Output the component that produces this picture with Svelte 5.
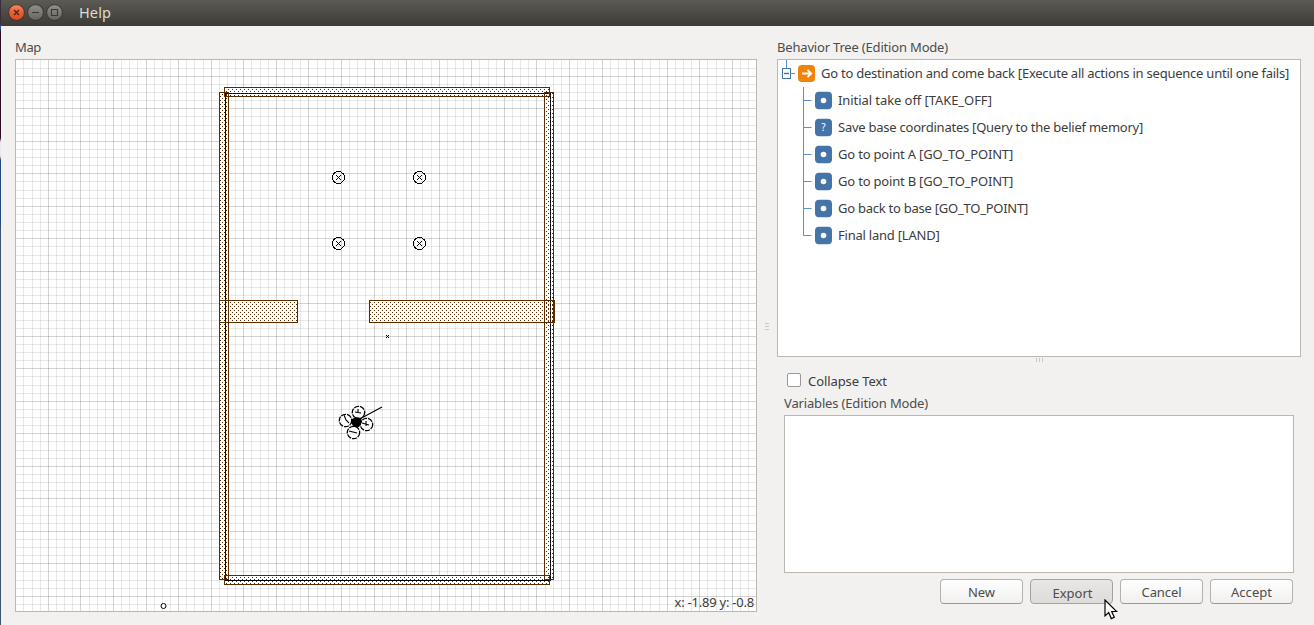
<script>
  const range = (start, step, end) => {
    const out = [];
    for (let i = 0; start + step * i < end; i++) out.push({ p: Math.floor(start + step * i), i });
    return out;
  };
  // coordinates inside the 740x551 scene, major line every fourth
  const cols = range(7.9, 8.143, 740).map((c) => ({ p: c.p, major: c.i % 4 === 3 }));
  const rows = range(8.2, 8.125, 551).map((r) => ({ p: r.p, major: r.i % 4 === 1 }));
  // x, y, width, height, hatch phase
  const walls = [
    [208.5, 27.5, 325, 9, 'odd'],
    [203.5, 32.5, 9, 487, 'even'],
    [528.5, 32.5, 9, 487, 'odd'],
    [208.5, 515.5, 325, 9, 'odd'],
    [203.5, 240.5, 78, 22, 'even'],
    [353.5, 240.5, 185, 22, 'even']
  ];
  const poles = [[322.5, 117.5], [403.5, 117.5], [322.5, 183.5], [403.5, 183.5]];
  const rotors = [[342.5, 352.5], [329.5, 360.5], [350.5, 364.5], [337.5, 372.5]];
  const tasks = [
    { text: 'Initial take off [TAKE_OFF]', w: 154 },
    { text: 'Save base coordinates [Query to the belief memory]', w: 305, query: true },
    { text: 'Go to point A [GO_TO_POINT]', w: 175 },
    { text: 'Go to point B [GO_TO_POINT]', w: 175 },
    { text: 'Go back to base [GO_TO_POINT]', w: 190 },
    { text: 'Final land [LAND]', w: 101.5 }
  ];
  // squeeze or stretch a label so that it occupies a given width
  function fit(node, width) {
    const run = () => {
      node.style.letterSpacing = '0px';
      const n = node.textContent.length;
      node.style.letterSpacing = (width - node.getBoundingClientRect().width) / n + 'px';
    };
    run();
    document.fonts?.ready.then(run);
  }
</script>

<div class="window">
  <header>
    <svg class="controls" width="60" height="26" viewBox="0 0 60 26">
      <defs>
        <linearGradient id="red" x1="0" y1="0" x2="0" y2="1"><stop offset="0" stop-color="#f58a68" /><stop offset=".5" stop-color="#ea5d32" /><stop offset="1" stop-color="#df4b1b" /></linearGradient>
        <linearGradient id="gray" x1="0" y1="0" x2="0" y2="1"><stop offset="0" stop-color="#92908a" /><stop offset="1" stop-color="#66645d" /></linearGradient>
      </defs>
      <circle cx="9.5" cy="12.5" r="7.9" fill="url(#red)" stroke="#37352f" />
      <circle cx="28.5" cy="12.5" r="7.9" fill="url(#gray)" stroke="#37352f" />
      <circle cx="47.5" cy="12.5" r="7.9" fill="url(#gray)" stroke="#37352f" />
      <path d="M7 10l5 5M12 10l-5 5" stroke="#4a291d" stroke-width="1.4" />
      <path d="M25 12.5h7M44.5 9.5h6v6h-6z" fill="none" stroke="#3b3933" stroke-width="1.1" />
    </svg>
    <h1><span use:fit={32}>Help</span></h1>
  </header>

  <main>
    <section class="left">
      <div class="label"><span use:fit={26}>Map</span></div>
      <div class="map">
        <svg width="740" height="551" viewBox="0 0 740 551">
          <defs>
            {#each ['even', 'odd'] as phase, y}
              <pattern id={phase} {y} width="4" height="4" patternUnits="userSpaceOnUse">
                <path d="M0 0h1v1h-1zM2 2h1v1h-1z" fill="#5a2c00" shape-rendering="crispEdges" />
              </pattern>
            {/each}
          </defs>
          <g shape-rendering="crispEdges">
            {#each cols as c}<rect x={c.p} y="0" width="1" height="551" fill="#000" fill-opacity={c.major ? 0.17 : 0.09} />{/each}
            {#each rows as r}<rect x="0" y={r.p} width="740" height="1" fill="#000" fill-opacity={r.major ? 0.17 : 0.09} />{/each}
            {#each walls as [x, y, w, h]}<rect {x} {y} width={w} height={h} fill="#fff" fill-opacity="0.9" />{/each}
            <rect x="209.5" y="33.5" width="325" height="487" fill="none" stroke="#000" />
            {#each walls as [x, y, w, h, phase]}<rect {x} {y} width={w} height={h} fill="url(#{phase})" stroke="#5a2c00" />{/each}
            <path d="M370 275h1v1h-1zM372 275h1v1h-1zM371 276h1v1h-1zM370 277h1v1h-1zM372 277h1v1h-1z" />
            {#each poles as [x, y]}
              <circle cx={x} cy={y} r="6" fill="none" stroke="#000" />
              <path d="M{x - 2.5} {y - 2.5}l5 5M{x + 2.5} {y - 2.5}l-5 5" stroke="#000" />
            {/each}
          </g>
          {#each rotors as [x, y]}
            <circle cx={x} cy={y} r="6.2" fill="#fff" fill-opacity=".7" stroke="#000" stroke-width="1.3" stroke-dasharray="5 1" />
          {/each}
          <path d="M336 359l4-2 5 1 1 4-3 5-5 0-3-4z" />
          <path d="M340 361L366 347M328 355l2 5 3 3M339 352l6 1M342 349v4M346 363l7 2M350 361v5M333 371l8 2" stroke="#000" stroke-width="1.1" fill="none" />
          <circle cx="147.5" cy="546" r="2.5" fill="#fff" stroke="#000" />
        </svg>
        <div class="coords"><span use:fit={79.5}>x: -1.89 y: -0.8</span></div>
      </div>
    </section>

    <div class="grip vertical"><i></i><i></i><i></i></div>

    <section class="right">
      <div class="label"><span use:fit={171}>Behavior Tree (Edition Mode)</span></div>
      <div class="tree">
        <div class="root">
          <svg width="42" height="27" viewBox="0 0 42 27">
            <path d="M8.5 0v9M13 13.5h4" stroke="#5b8fd0" fill="none" />
            <rect x="4.5" y="8.5" width="8" height="10" fill="#fff" stroke="#4574a8" />
            <path d="M6 13.5h5" stroke="#2f73c4" stroke-width="1.4" />
            <rect x="20" y="5" width="17" height="17" rx="4" fill="#ef8406" />
            <path d="M24 13.5h9M29.5 9.8l3.7 3.7-3.7 3.7" stroke="#fff" stroke-width="1.9" fill="none" />
          </svg>
          <span use:fit={468}>Go to destination and come back [Execute all actions in sequence until one fails]</span>
        </div>
        {#each tasks as t, i}
          <div class="task">
            <svg width="34" height="27" viewBox="0 0 34 27">
              <path d={i === tasks.length - 1 ? 'M.5 0v13.5h8' : 'M.5 0v27M.5 13.5h8'} stroke="#5b8fd0" fill="none" />
              <rect x="12" y="4.8" width="17" height="17.4" rx="4" fill="#4574a8" />
              {#if t.query}
                <text x="20.5" y="17.4" text-anchor="middle" fill="#fff" font-size="10">?</text>
              {:else}
                <circle cx="20.5" cy="13.5" r="2.8" fill="#fff" />
              {/if}
            </svg>
            <span use:fit={t.w}>{t.text}</span>
          </div>
        {/each}
      </div>
      <div class="grip"><i></i><i></i><i></i></div>
      <div class="editor">
        <label><input type="checkbox" /><span use:fit={79}>Collapse Text</span></label>
        <div class="label"><span use:fit={144}>Variables (Edition Mode)</span></div>
        <div class="variables"></div>
        <div class="buttons">
          <button><span use:fit={27}>New</span></button>
          <button class="pressed"><span use:fit={40}>Export</span></button>
          <button><span use:fit={40}>Cancel</span></button>
          <button><span use:fit={41}>Accept</span></button>
        </div>
      </div>
    </section>
  </main>
  <svg class="cursor" width="14" height="22" viewBox="0 0 14 22">
    <path d="M1 1v16l3.7-3.4 2.6 6 3-1.3-2.6-5.8h5z" fill="#fff" stroke="#000" stroke-width="1.2" />
  </svg>
</div>

<style>
  :global(body) { margin: 0; overflow: hidden; }
  .window { position: relative; box-sizing: border-box; width: 1314px; height: 625px; display: flex; flex-direction: column; background: #f2f1f0; color: #3c3c3c; font: 13px/18px "Noto Sans", "Open Sans", sans-serif; }
  .window::before { content: ""; position: absolute; left: 0; top: 0; width: 1px; height: 625px; background: linear-gradient(#3b2c3d 0 24px, #225a8d 26px 28px, #2c0a26 32px 138px, #e8e8e8 142px 156px, #274b7a 160px 225px, #3d5275 230px); }
  span { display: inline-block; white-space: nowrap; }
  header { height: 26px; display: flex; background: linear-gradient(#5c5a53, #3d3b37); color: #dfdbd2; }
  .controls { margin-left: 7px; }
  h1 { margin: 0 0 0 12px; font-size: 14.5px; font-weight: 400; line-height: 24px; }
  main { flex: 1; display: flex; padding: 12px 13px 0 15px; }
  .label { height: 18px; margin-bottom: 3px; color: #4c4c4c; }
  .left { width: 742px; }
  .map { position: relative; box-sizing: border-box; width: 742px; height: 553px; border: 1px solid #bcb8b1; background: #fff; }
  .map svg { display: block; }
  .coords { position: absolute; right: 2px; bottom: 0; }
  .grip { display: flex; justify-content: center; gap: 2px; height: 4px; padding: 1px 0 3px; }
  .grip i { width: 1px; height: 4px; background: #cbc9c5; }
  .grip.vertical { width: 20px; height: auto; padding: 0 0 10px; flex-direction: column; align-items: center; }
  .grip.vertical i { width: 4px; height: 1px; }
  .right { width: 524px; }
  .tree { box-sizing: border-box; height: 298px; border: 1px solid #bcb8b1; background: #fff; }
  .root, .task { display: flex; align-items: center; height: 27px; }
  .root svg, .task svg { flex: none; margin-right: 1px; }
  .root span, .task span { margin-bottom: 2px; }
  .task { padding-left: 25px; }
  .editor { display: flex; flex-direction: column; padding: 2px 7px 0; }
  label { display: flex; align-items: center; height: 27px; padding-left: 3px; }
  input { appearance: none; box-sizing: border-box; width: 14px; height: 14px; margin: 0 7px 2px 0; border: 1px solid #9b9893; border-radius: 2px; background: #fff; }
  .editor .label { height: 17px; margin: 0 0 4px; }
  .variables { box-sizing: border-box; height: 158px; border: 1px solid #bcb8b1; background: #fff; }
  .buttons { display: flex; justify-content: flex-end; gap: 7px; padding: 6px 1px 0 0; }
  button { box-sizing: border-box; width: 83px; height: 25px; padding: 0; border: 1px solid #b5b2ad; border-bottom-color: #9c9994; border-radius: 4px; background: linear-gradient(#fff, #f1f0ef); color: #4c4c4c; font: inherit; }
  .pressed { background: linear-gradient(#e9e7e6, #dedbd9); border-color: #a5a29d; padding: 2px 0 0 2px; }
  .cursor { position: absolute; left: 1104px; top: 599px; }
</style>
